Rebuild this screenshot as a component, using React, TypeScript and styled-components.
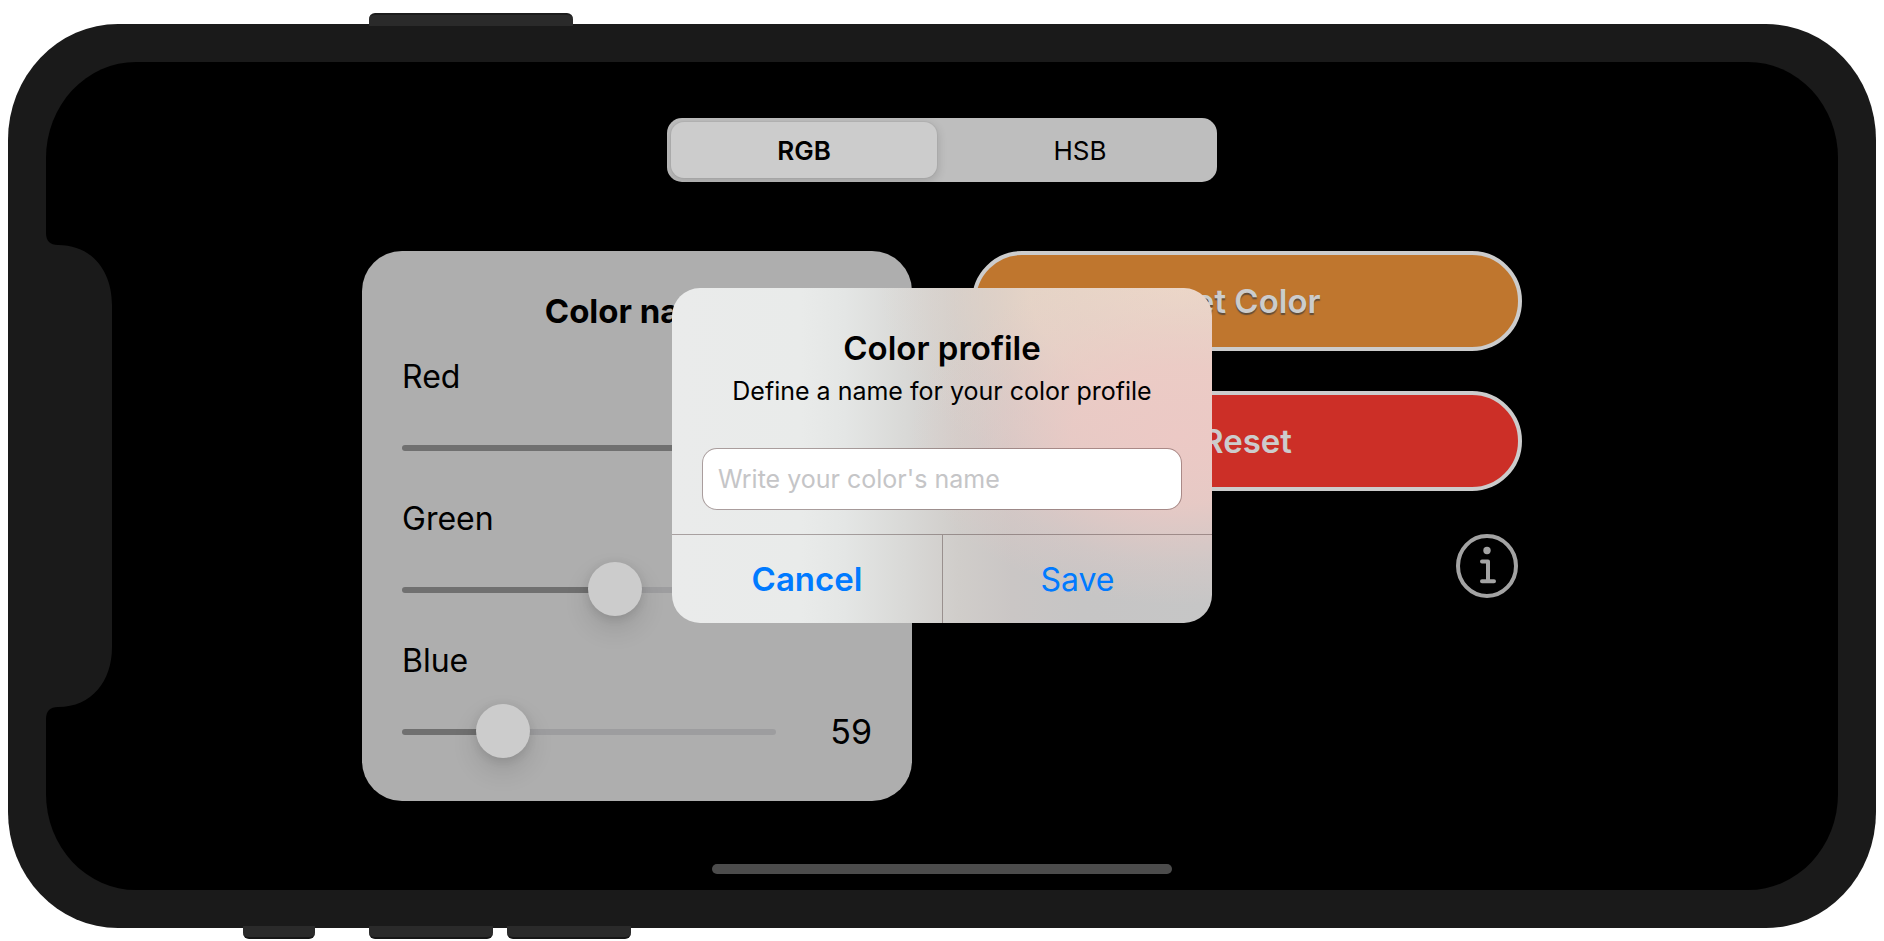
import React, { useState } from "react";
import styled, { createGlobalStyle, css } from "styled-components";

const Global = createGlobalStyle`
  *, *::before, *::after { box-sizing: border-box; }
  body { margin: 0; background: #fff; font-family: Inter, "Liberation Sans", sans-serif; color: #000; }
  button, input { font: inherit; }
`;

const Stage = styled.div`
  padding: 24px 8px 13px;
`;

const Phone = styled.div`
  position: relative;
  padding: 38px;
  background: #1a1a1a;
  border-radius: 110px / 116px;
`;

const SideButton = styled.span<{ $edge: "top" | "bottom"; $left: number; $width: number }>`
  position: absolute;
  left: ${(p) => p.$left}px;
  width: ${(p) => p.$width}px;
  height: 13px;
  background: #2a2a2a;
  ${(p) =>
    p.$edge === "top"
      ? css`
          top: -11px;
          border-radius: 6px 6px 0 0;
          border-top: 2px solid #1c1c1c;
        `
      : css`
          bottom: -11px;
          border-radius: 0 0 6px 6px;
          border-bottom: 2px solid #161616;
        `}
`;

const Screen = styled.main`
  position: relative;
  display: flex;
  flex-direction: column;
  align-items: center;
  padding: 56px 40px 16px;
  background: #000;
  border-radius: 90px / 96px;
  overflow: hidden;
`;

const Notch = styled.svg`
  position: absolute;
  left: 0;
  top: 171px;
  width: 66px;
  height: 486px;
`;

const Segments = styled.div`
  display: flex;
  gap: 10px;
  width: 100%;
  max-width: 550px;
  height: 64px;
  padding: 4px;
  background: #bebebe;
  border-radius: 15px;
  overflow: hidden;
`;

const Segment = styled.button<{ $active: boolean }>`
  flex: 1;
  border: 0;
  padding: 0;
  border-radius: 13px;
  font-size: 26px;
  font-weight: ${(p) => (p.$active ? 600 : 400)};
  color: #000;
  background: ${(p) => (p.$active ? "#cccccc" : "transparent")};
  box-shadow: ${(p) => (p.$active ? "0 3px 8px 2px rgba(0,0,0,.12), 0 0 0 1px rgba(0,0,0,.03)" : "none")};
`;

const Columns = styled.div`
  display: grid;
  grid-template-columns: repeat(2, minmax(0, 550px));
  justify-content: center;
  gap: 60px;
  width: 100%;
  margin-top: 69px;
`;

const Card = styled.section`
  display: flex;
  flex-direction: column;
  height: 550px;
  padding: 40px;
  background: #aeaeae;
  border-radius: 40px;
`;

const CardTitle = styled.h1`
  margin: 0 0 25px;
  font-size: 33px;
  line-height: 40px;
  font-weight: 700;
  text-align: center;
`;

const Channel = styled.div`
  height: 142px;
  flex: none;
`;

const ChannelLabel = styled.label`
  display: block;
  font-size: 32px;
  line-height: 42px;
`;

const ChannelRow = styled.div`
  display: flex;
  align-items: center;
  margin-top: 23px;
  height: 54px;
`;

const Slider = styled.input<{ $fill: string }>`
  flex: 1;
  min-width: 0;
  height: 54px;
  margin: 0;
  appearance: none;
  background: none;

  &::-webkit-slider-runnable-track {
    height: 6px;
    border-radius: 3px;
    background: linear-gradient(to right, #707070 ${(p) => p.$fill}, #9d9d9f ${(p) => p.$fill});
  }
  &::-webkit-slider-thumb {
    appearance: none;
    width: 54px;
    height: 54px;
    margin-top: -25px;
    border-radius: 50%;
    background: #cccccc;
    box-shadow: 0 12px 26px rgba(0, 0, 0, 0.13), 0 2px 10px rgba(0, 0, 0, 0.1);
  }
`;

const Value = styled.output`
  width: 96px;
  font-size: 34px;
  line-height: 42px;
  text-align: right;
`;

const Actions = styled.div`
  display: flex;
  flex-direction: column;
  gap: 40px;
`;

const Pill = styled.button<{ $color: string; $raised?: boolean }>`
  height: 100px;
  border: 4px solid #cccccc;
  border-radius: 50px;
  background: ${(p) => p.$color};
  color: #cccccc;
  font-size: 33px;
  font-weight: 600;
  text-shadow: ${(p) => (p.$raised ? "0 2px 1px rgba(60,60,60,.7)" : "none")};
`;

const InfoButton = styled.button`
  align-self: flex-end;
  width: 62px;
  height: 64px;
  margin: 3px 4px 0 0;
  padding: 0;
  border: 0;
  background: none;
  color: #a3a3a3;

  svg { display: block; }
`;

const HomeIndicator = styled.div`
  width: 460px;
  max-width: 60%;
  height: 10px;
  margin-top: 63px;
  border-radius: 5px;
  background: #4c4c4c;
`;

const Overlay = styled.div`
  position: absolute;
  inset: 0;
  display: grid;
  place-items: center;
  padding-bottom: 41px;
`;

const Dialog = styled.form`
  width: 540px;
  max-width: 90%;
  overflow: hidden;
  border-radius: 28px;
  background:
    radial-gradient(ellipse 270px 170px at 94% 44%, rgba(236, 201, 197, 1), rgba(236, 202, 197, 0.85) 40%, rgba(232, 203, 199, 0.3) 75%, rgba(230, 204, 200, 0) 100%),
    radial-gradient(ellipse 300px 210px at 94% 0%, rgba(236, 216, 200, 1), rgba(234, 214, 199, 0.85) 50%, rgba(228, 212, 202, 0.3) 78%, rgba(225, 212, 205, 0) 100%),
    linear-gradient(to right, #eaebeb 0%, #e9ebea 24%, #e4e6e5 32%, #d9d9d7 43%, #d0cdca 53%, #cac6c5 63%, #c6c5c5 76%, #c6c6c6 100%);
`;

const DialogBody = styled.div`
  display: flex;
  flex-direction: column;
  padding: 40px 30px 24px;
  text-align: center;
`;

const DialogTitle = styled.h2`
  margin: 0;
  font-size: 33px;
  line-height: 40px;
  font-weight: 600;
`;

const DialogText = styled.label`
  margin-top: 6px;
  font-size: 25px;
  line-height: 34px;
`;

const NameInput = styled.input`
  width: 100%;
  height: 62px;
  margin-top: 40px;
  padding: 0 15px;
  border: 1px solid rgba(80, 50, 50, 0.42);
  border-radius: 15px;
  background: #fff;
  background-clip: padding-box;
  font-size: 25px;
  outline: none;

  &::placeholder { color: #c5c5c7; opacity: 1; }
`;

const DialogActions = styled.div`
  display: grid;
  grid-template-columns: 1fr 1fr;
  border-top: 1px solid rgba(60, 40, 40, 0.38);
`;

const DialogButton = styled.button<{ $strong?: boolean }>`
  height: 88px;
  padding: 0;
  border: 0;
  background: none;
  color: #007aff;
  font-size: ${(p) => (p.$strong ? 33 : 32)}px;
  font-weight: ${(p) => (p.$strong ? 600 : 400)};

  & + & { border-left: 1px solid rgba(60, 40, 40, 0.38); }
`;

const modes = ["RGB", "HSB"];
const initial = { Red: 239, Green: 148, Blue: 59 };
type ChannelName = keyof typeof initial;

export default function App() {
  const [mode, setMode] = useState("RGB");
  const [levels, setLevels] = useState(initial);

  return (
    <>
      <Global />
      <Stage>
        <Phone>
          <SideButton $edge="top" $left={361} $width={204} />
          <SideButton $edge="bottom" $left={235} $width={72} />
          <SideButton $edge="bottom" $left={361} $width={124} />
          <SideButton $edge="bottom" $left={499} $width={124} />
          <Screen>
            <Notch viewBox="0 0 66 486" aria-hidden="true">
              <path
                d="M0 0 C0 8 4 12 12 12 C46 12 66 38 66 72 V414 C66 448 46 474 12 474 C4 474 0 478 0 486 Z"
                fill="#1a1a1a"
              />
            </Notch>
            <Segments>
              {modes.map((m) => (
                <Segment key={m} type="button" $active={m === mode} onClick={() => setMode(m)}>
                  {m}
                </Segment>
              ))}
            </Segments>
            <Columns>
              <Card>
                <CardTitle>Color name</CardTitle>
                {(Object.keys(levels) as ChannelName[]).map((name) => (
                  <Channel key={name}>
                    <ChannelLabel htmlFor={name}>{name}</ChannelLabel>
                    <ChannelRow>
                      <Slider
                        id={name}
                        type="range"
                        min={0}
                        max={255}
                        value={levels[name]}
                        $fill={`${Math.round((levels[name] / 255) * 86 + 7)}%`}
                        onChange={(e) => setLevels({ ...levels, [name]: Number(e.target.value) })}
                      />
                      <Value htmlFor={name}>{levels[name]}</Value>
                    </ChannelRow>
                  </Channel>
                ))}
              </Card>
              <Actions>
                <Pill type="button" $color="#bf762e" $raised>
                  Set Color
                </Pill>
                <Pill type="button" $color="#cc2f27" onClick={() => setLevels(initial)}>
                  Reset
                </Pill>
                <InfoButton type="button" aria-label="Information">
                  <svg width="62" height="64" viewBox="0 0 62 64" fill="none" stroke="currentColor">
                    <ellipse cx="31" cy="32" rx="29" ry="30" strokeWidth="4" />
                    <circle cx="31" cy="16.5" r="3.7" fill="currentColor" stroke="none" />
                    <path d="M26 27.5H32V47M26 47.3H38" strokeWidth="4" strokeLinecap="round" strokeLinejoin="round" />
                  </svg>
                </InfoButton>
              </Actions>
            </Columns>
            <HomeIndicator />
            <Overlay>
              <Dialog role="dialog" aria-labelledby="profile-title" onSubmit={(e) => e.preventDefault()}>
                <DialogBody>
                  <DialogTitle id="profile-title">Color profile</DialogTitle>
                  <DialogText htmlFor="profile-name">Define a name for your color profile</DialogText>
                  <NameInput id="profile-name" type="text" placeholder="Write your color's name" />
                </DialogBody>
                <DialogActions>
                  <DialogButton type="button" $strong>
                    Cancel
                  </DialogButton>
                  <DialogButton type="submit">Save</DialogButton>
                </DialogActions>
              </Dialog>
            </Overlay>
          </Screen>
        </Phone>
      </Stage>
    </>
  );
}
